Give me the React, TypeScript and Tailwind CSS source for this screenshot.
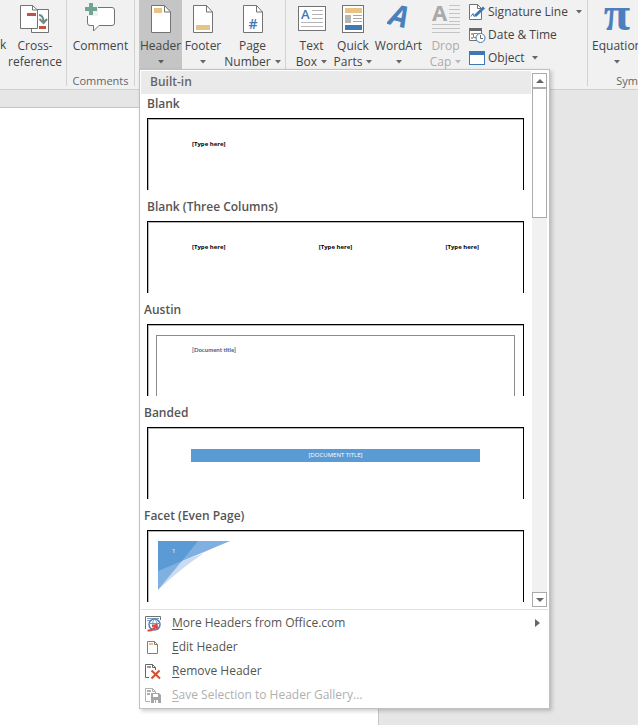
import { ReactNode } from "react";

const CrossRefIcon = () => (
  <svg width="32" height="32" viewBox="0 0 32 32" fill="none">
    <path d="M12.5 6.5H29.5V29.5H12.5Z" fill="#fff" stroke="#737373" />
    <path d="M1.5 2.5H13.5L18.5 7V25.5H1.5Z" fill="#fff" stroke="#737373" />
    <path d="M13.5 2.5V7H18.5" stroke="#737373" />
    <rect x="8" y="10" width="9" height="3" fill="#c8503f" />
    <rect x="20" y="23" width="7" height="3" fill="#c8503f" />
    <path d="M20 12C23 12 24.5 14 24.5 19.500M20.500 16L24.500 20L28 16" stroke="#6d8b80" strokeWidth="2" />
  </svg>
);

const CommentIcon = () => (
  <svg width="32" height="32" viewBox="0 0 32 32" fill="none">
    <path d="M5 4.500H27Q29.500 4.500 29.500 7V20Q29.500 22.500 27 22.500H14L8.500 28V22.500H5Q2.500 22.500 2.500 20V8" fill="#fff" stroke="#737373" />
    <path d="M0 0H13V13H0Z" fill="#f1f1f1" />
    <path d="M4 0H8V4H12V8H8V12H4V8H0V4H4Z" fill="#6fa592" />
  </svg>
);

const PageIcon = ({ children }: { children: ReactNode }) => (
  <svg width="22" height="32" viewBox="0 0 22 32" fill="none">
    <path d="M1.5 2.5H14.500L20.500 9V29.500H1.500Z" fill="#fff" stroke="#737373" />
    <path d="M14.500 2.500V9H20.500" stroke="#737373" />
    {children}
  </svg>
);

const TextBoxIcon = () => (
  <svg width="30" height="32" viewBox="0 0 30 32" fill="none">
    <rect x="1.500" y="3.500" width="27" height="24" fill="#fff" stroke="#737373" />
    <text x="4" y="16" fontSize="13" fontWeight="600" fill="#3f78b5">A</text>
    <path d="M15 7.500H26M15 11.500H26M15 15.500H26M4 19.500H26M4 23.500H26" stroke="#b5b5b5" />
  </svg>
);

const QuickPartsIcon = () => (
  <svg width="24" height="32" viewBox="0 0 24 32" fill="none">
    <rect x="1.500" y="2.500" width="21" height="27" fill="#fff" stroke="#737373" />
    <rect x="4" y="5" width="17" height="5" fill="#e9c381" />
    <rect x="4" y="12" width="6" height="8" fill="#b5b5b5" />
    <path d="M12 12.500H21M12 15.500H21M12 18.500H21" stroke="#a6a6a6" />
    <rect x="4" y="22" width="17" height="5" fill="#3f78b5" />
  </svg>
);

const WordArtIcon = () => (
  <svg width="24" height="32" viewBox="0 0 24 32" fill="none">
    <text x="0" y="22" fontSize="30" fontWeight="700" fontStyle="italic" fill="#4a80bd" transform="rotate(14 4 24)">A</text>
  </svg>
);

const DropCapIcon = () => (
  <svg width="30" height="32" viewBox="0 0 30 32" fill="none">
    <text x="1" y="18" fontSize="22" fontWeight="700" fill="#a9a9a9">A</text>
    <path d="M18 2.500H29M18 6.500H29M18 10.500H29M18 14.500H29M18 18.500H29M1 21.500H29M1 25.500H29M1 29.500H29" stroke="#c4c4c4" />
  </svg>
);

const EquationIcon = () => (
  <svg width="28" height="32" viewBox="0 0 28 32" fill="none">
    <text x="14" y="27" textAnchor="middle" fontSize="48" fontWeight="700" fill="#4a80bd" className="font-['Liberation_Serif',serif]">π</text>
  </svg>
);

const SignatureIcon = () => (
  <svg width="17" height="18" viewBox="0 0 17 18" fill="none">
    <path d="M.5 1.500H8.500L12.500 5.500V16.500H.5Z" fill="#fff" stroke="#737373" />
    <path d="M8.500 1.500V5.500H12.500" stroke="#737373" />
    <path d="M2 13.500L4 10.500L5 13.500L7 12" stroke="#3f78b5" />
    <path d="M6 13L15 4.500" stroke="#3f78b5" strokeWidth="3" />
  </svg>
);

const DateIcon = () => (
  <svg width="17" height="18" viewBox="0 0 17 18" fill="none">
    <path d="M.5 2.500H12.500V14.500H.5Z" fill="#fff" stroke="#737373" />
    <path d="M0 2H13V5H0Z" fill="#6a6a6a" />
    <path d="M2 7H4V9H2ZM9 7H11V9H9ZM2 11H4V13H2Z" fill="#c9a48b" />
    <path d="M4.500 7.500H8.500V11.500H4.500Z" stroke="#cf6a3a" />
    <circle cx="11.500" cy="12" r="4.500" fill="#fff" stroke="#3f78b5" />
    <path d="M11.500 9V12.500H14" stroke="#6a6a6a" />
  </svg>
);

const ObjectIcon = () => (
  <svg width="17" height="18" viewBox="0 0 17 18" fill="none">
    <rect x=".5" y="2.500" width="15" height="13" fill="#fff" stroke="#3f78b5" />
    <rect x="0" y="2" width="16" height="4" fill="#3f78b5" />
  </svg>
);

const MoreIcon = () => (
  <svg width="17" height="17" viewBox="0 0 17 17" fill="none">
    <path d="M.5 14V1.500H15.500V5" stroke="#737373" />
    <path d="M2 3.500H14M2 5.500H6" stroke="#8aa4c4" />
    <circle cx="9.500" cy="9.500" r="5.500" fill="#fff" stroke="#4a80bd" strokeWidth="1.500" />
    <path d="M9.500 4C7 7 7 12 9.500 15M9.500 4C13 7 13 12 9.500 15M4 8.500H15" stroke="#6f9bd0" />
    <path d="M2.500 15.500C6 16 9 14.500 11 11M7 11L11.500 10L12.500 14.500" stroke="#e0443c" strokeWidth="2" />
  </svg>
);

const EditIcon = () => (
  <svg width="17" height="17" viewBox="0 0 17 17" fill="none">
    <path d="M2.500 2.500H9.500L12.500 5.500V14.500H2.500Z" fill="#fff" stroke="#8a7d68" />
    <path d="M9.500 2.500V5.500H12.500" stroke="#8a7d68" />
    <path d="M4 5H8" stroke="#e9c381" strokeWidth="2" />
  </svg>
);

const RemoveIcon = () => (
  <svg width="17" height="17" viewBox="0 0 17 17" fill="none">
    <path d="M4 14.500H.5V1.500H7.500L10.500 4.500V7" stroke="#666" />
    <path d="M7.500 1.500V4.500H10.500" stroke="#666" />
    <path d="M2 4H6" stroke="#999" strokeWidth="2" />
    <path d="M6.500 7.500L15 15.500M14.500 7.500L6.500 15.500" stroke="#d2502f" strokeWidth="2" />
  </svg>
);

const SaveIcon = () => (
  <svg width="17" height="17" viewBox="0 0 17 17" fill="none">
    <path d="M5 14.500H.5V1.500H7.500L10.500 4.500V6" stroke="#b0b0b0" />
    <path d="M7.500 1.500V4.500H10.500" stroke="#b0b0b0" />
    <path d="M2 4H6M2 7H5" stroke="#b0b0b0" strokeWidth="2" />
    <path d="M6 6H14L16 8V16H6Z" fill="#a5a5a5" />
    <path d="M8 7H13V10H8ZM9 13H13V16H9Z" fill="#fff" />
    <path d="M10 13H11V16H10Z" fill="#a5a5a5" />
  </svg>
);

const Arrow = ({ className = "text-[#666]" }: { className?: string }) => (
  <svg width="6" height="4" viewBox="0 0 6 4" className={`inline-block shrink-0 ${className}`}>
    <path d="M0 0H6L3 3.500Z" fill="currentColor" />
  </svg>
);

type RibbonButtonProps = {
  icon: ReactNode;
  line1: string;
  line2?: string;
  arrow?: boolean;
  className?: string;
};

function RibbonButton({ icon, line1, line2, arrow, className = "" }: RibbonButtonProps) {
  return (
    <button className={`flex h-[69px] shrink-0 flex-col items-center pt-[3px] leading-4 whitespace-nowrap ${className}`}>
      <span className="mb-[3px] flex h-8 justify-center">{icon}</span>
      <span>{line1}</span>
      <span className="flex h-4 items-center gap-1">
        {line2}
        {arrow && <Arrow className="text-current opacity-80" />}
      </span>
    </button>
  );
}

function RibbonGroup({ label, className, children }: { label?: string; className: string; children: ReactNode }) {
  return (
    <div className={`flex flex-col ${className}`}>
      <div className="flex h-[73px]">{children}</div>
      {label && <div className="text-center text-[11px] leading-4 text-[#666]">{label}</div>}
    </div>
  );
}

const Divider = () => <div className="h-[86px] w-px shrink-0 bg-[#d2d2d2]" />;

function SmallButton({ icon, label, arrow }: { icon: ReactNode; label: string; arrow?: boolean }) {
  return (
    <button className="flex h-[23px] items-center whitespace-nowrap">
      <span className="mr-0.5 w-[17px]">{icon}</span>
      {label}
      {arrow && <span className="ml-2 flex"><Arrow /></span>}
    </button>
  );
}

const gallery = [
  {
    name: "Blank",
    indent: "pl-1.5",
    preview: <div className="px-11 pt-[19px] text-[6px] leading-3 font-bold text-black">[Type here]</div>,
  },
  {
    name: "Blank (Three Columns)",
    indent: "pl-1.5",
    preview: (
      <div className="flex justify-between px-11 pt-[19px] text-[6px] leading-3 font-bold text-black">
        <span>[Type here]</span>
        <span>[Type here]</span>
        <span>[Type here]</span>
      </div>
    ),
  },
  {
    name: "Austin",
    indent: "pl-[3px]",
    preview: (
      <div className="mx-2 mt-2.5 h-[61px] border border-b-0 border-[#8c8c8c] px-[35px] pt-2 font-['Lato','Open_Sans',sans-serif] text-[6px] leading-3 font-bold text-[#44618c]">
        [Document title]
      </div>
    ),
  },
  {
    name: "Banded",
    indent: "pl-[3px]",
    preview: (
      <div className="mx-[43px] mt-[21px] h-[13px] bg-[#5b9bd5] text-center text-[6px] leading-[13px] text-white">
        [DOCUMENT TITLE]
      </div>
    ),
  },
  {
    name: "Facet (Even Page)",
    indent: "pl-[3px]",
    preview: (
      <div className="relative ml-2.5 pt-2.5">
        <svg width="72" height="50" viewBox="0 0 72 50">
          <path d="M0 49L24 20L46 12Q22 28 0 49Z" fill="#c9dcf1" />
          <path d="M0 0H72L46 11L24 20L0 49Z" fill="#7fb0e0" />
          <path d="M0 0H40L24 20L0 30Z" fill="#5b9bd5" />
        </svg>
        <span className="absolute top-3.5 left-3.5 text-[6px] leading-3 text-white">1</span>
      </div>
    ),
  },
];

const actions = [
  { key: "M", rest: "ore Headers from Office.com", icon: <MoreIcon />, submenu: true },
  { key: "E", rest: "dit Header", icon: <EditIcon /> },
  { key: "R", rest: "emove Header", icon: <RemoveIcon /> },
  { key: "S", rest: "ave Selection to Header Gallery...", icon: <SaveIcon />, disabled: true },
];

function Scrollbar() {
  return (
    <div className="ml-px flex w-[15px] shrink-0 flex-col bg-[#f1f1f1]">
      <button aria-label="Scroll up" className="flex h-[15px] items-center justify-center border border-[#ababab] bg-white">
        <svg width="8" height="4" viewBox="0 0 8 4"><path d="M0 4L4 0L8 4Z" fill="#666" /></svg>
      </button>
      <div className="h-[130px] border border-[#ababab] bg-white" />
      <button aria-label="Scroll down" className="mt-auto flex h-[15px] items-center justify-center border border-[#ababab] bg-white">
        <svg width="8" height="4" viewBox="0 0 8 4"><path d="M0 0H8L4 4Z" fill="#666" /></svg>
      </button>
    </div>
  );
}

function HeaderMenu() {
  return (
    <div className="absolute top-[69px] left-[139px] w-[411px] border border-[#c0c0c0] bg-white p-px text-[#555] shadow-[2px_2px_4px_rgba(0,0,0,0.2)]">
      <div className="flex pr-px">
        <div className="flex-1">
          <h2 className="h-[23px] bg-[#eaeaea] pl-[9px] leading-[22px] font-semibold text-[#666]">Built-in</h2>
          <ul className="flex flex-col gap-[7px] pb-[7px]">
            {gallery.map(item => (
              <li key={item.name}>
                <button className="block w-full text-left">
                  <span className={`block h-6 leading-5 font-semibold ${item.indent}`}>{item.name}</span>
                  <div className="mr-[7px] ml-1.5 h-[72px] overflow-hidden border border-b-0 border-black shadow-[inset_1px_1px_0_#b5b5b5]">
                    {item.preview}
                  </div>
                </button>
              </li>
            ))}
          </ul>
        </div>
        <div className="flex py-0.5">
          <Scrollbar />
        </div>
      </div>
      <div className="border-t border-[#e1e1e1] pt-px">
        {actions.map(a => (
          <button
            key={a.key}
            disabled={a.disabled}
            className="flex h-6 w-full items-center pr-2 pl-1 disabled:text-[#b0b0b0]"
          >
            <span className="mr-2.5 w-[17px]">{a.icon}</span>
            <span><u className="underline-offset-2">{a.key}</u>{a.rest}</span>
            {a.submenu && (
              <svg width="5" height="8" viewBox="0 0 5 8" className="ml-auto"><path d="M0 0L5 4L0 8Z" fill="#666" /></svg>
            )}
          </button>
        ))}
      </div>
    </div>
  );
}

export default function App() {
  return (
    <div className="relative flex min-h-screen flex-col overflow-hidden bg-[#e6e6e6] font-['Open_Sans','Noto_Sans',sans-serif] text-[12px] text-[#444]">
      <header className="flex h-[90px] overflow-hidden border-b border-[#d0d0d0] bg-[#f1f1f1]">
        <RibbonGroup className="w-[66px] shrink-0">
          <RibbonButton className="w-2 items-start" icon={null} line1="k" />
          <RibbonButton className="w-[54px]" icon={<CrossRefIcon />} line1="Cross-" line2="reference" />
        </RibbonGroup>
        <Divider />
        <RibbonGroup label="Comments" className="w-[67px] shrink-0">
          <RibbonButton className="w-full" icon={<CommentIcon />} line1="Comment" />
        </RibbonGroup>
        <Divider />
        <RibbonGroup className="w-[150px] shrink-0 pl-1">
          <RibbonButton className="w-[43px] bg-[#c5c5c5]" icon={<PageIcon><path d="M4 5H12V10H4Z" fill="#e9c381" /></PageIcon>} line1="Header" arrow />
          <RibbonButton className="w-[42px]" icon={<PageIcon><path d="M4 22H18V27H4Z" fill="#e9c381" /></PageIcon>} line1="Footer" arrow />
          <RibbonButton
            className="w-[57px]"
            icon={<PageIcon><text x="11" y="26" textAnchor="middle" fontSize="14" fontWeight="600" fill="#3f78b5">#</text></PageIcon>}
            line1="Page"
            line2="Number"
            arrow
          />
        </RibbonGroup>
        <Divider />
        <RibbonGroup className="w-[301px] shrink-0 pl-[5px]">
          <RibbonButton className="w-[41px]" icon={<TextBoxIcon />} line1="Text" line2="Box" arrow />
          <RibbonButton className="w-[42px]" icon={<QuickPartsIcon />} line1="Quick" line2="Parts" arrow />
          <RibbonButton className="w-[49px]" icon={<WordArtIcon />} line1="WordArt" arrow />
          <RibbonButton className="w-[45px] text-[#ababab]" icon={<DropCapIcon />} line1="Drop" line2="Cap" arrow />
          <div className="flex flex-col items-start pl-px">
            <SmallButton icon={<SignatureIcon />} label="Signature Line" arrow />
            <SmallButton icon={<DateIcon />} label="Date & Time" />
            <SmallButton icon={<ObjectIcon />} label="Object" arrow />
          </div>
        </RibbonGroup>
        <Divider />
        <div className="min-w-0 flex-1">
          <RibbonButton className="ml-auto w-[42px]" icon={<EquationIcon />} line1="Equation" arrow />
          <div className="mt-1 text-right text-[11px] leading-4 text-[#666]">Sym</div>
        </div>
      </header>
      <main className="mt-[17px] w-[379px] flex-1 border-t border-r border-[#c6c6c6] bg-white" />
      <HeaderMenu />
    </div>
  );
}
